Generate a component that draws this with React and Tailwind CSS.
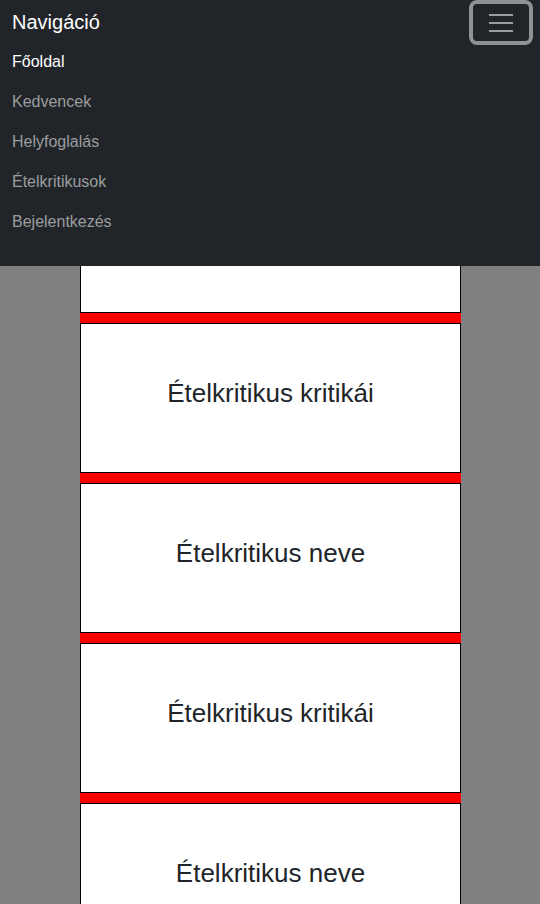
import React from "react";

const font = { fontFamily: '"Liberation Sans", Arial, sans-serif' };

function Box({ text }) {
  return (
    <div className="h-[150px] border border-black bg-white flex items-center justify-center">
      <h2 className="text-[26px] leading-[1.2] mb-2 text-[#212529] font-normal">{text}</h2>
    </div>
  );
}

export default function App() {
  const items = [
    "Ételkritikus kritikái",
    "Ételkritikus neve",
    "Ételkritikus kritikái",
    "Ételkritikus neve",
    "Ételkritikus kritikái",
    "Ételkritikus neve",
  ];
  const links = ["Főoldal", "Kedvencek", "Helyfoglalás", "Ételkritikusok", "Bejelentkezés"];
  return (
    <div className="min-h-screen bg-[#808080] overflow-hidden" style={font}>
      <div className="pl-[80px] pt-[3px]">
        <div className="w-[381px] flex flex-col">
          {items.map((t, i) => (
            <React.Fragment key={i}>
              {i > 0 && <div className="h-[10px] bg-[#ff0000]" />}
              <Box text={t} />
            </React.Fragment>
          ))}
        </div>
      </div>

      <nav className="fixed top-0 left-0 right-0 h-[266px] bg-[#212529]">
        <div className="flex justify-between items-start pl-3 pr-[7px]">
          <a className="mt-[7px] text-[20px] leading-[30px] text-white">Navigáció</a>
          <button className="w-[64px] h-[45px] rounded-[8px] border-[4px] border-[#8f9194] flex flex-col items-center justify-center gap-[6px]">
            <span className="block w-[24px] h-[2px] bg-[#9b9d9f]" />
            <span className="block w-[24px] h-[2px] bg-[#9b9d9f]" />
            <span className="block w-[24px] h-[2px] bg-[#9b9d9f]" />
          </button>
        </div>
        <ul className="pl-3 mt-[-3px] flex flex-col">
          {links.map((l, i) => (
            <li key={l} className="h-[40px] py-2">
              <a className={"text-[16px] leading-[24px] " + (i === 0 ? "text-white" : "text-[#9b9d9f]")}>{l}</a>
            </li>
          ))}
        </ul>
      </nav>
    </div>
  );
}
